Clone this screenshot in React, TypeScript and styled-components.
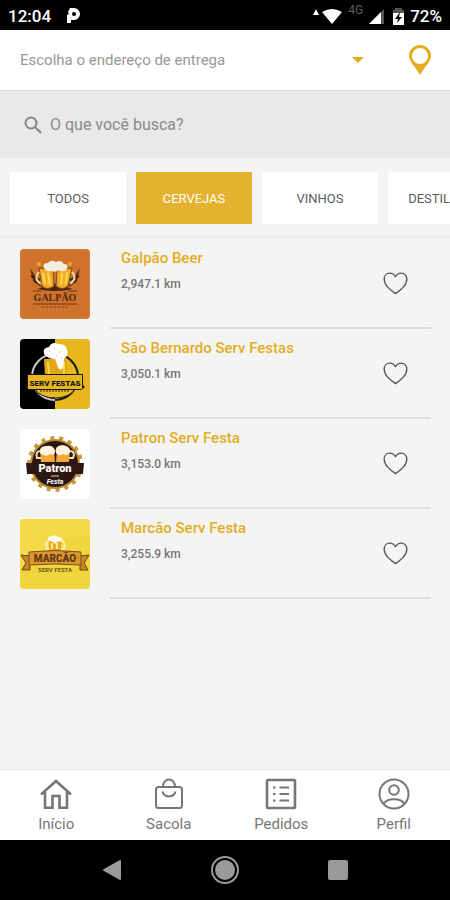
import React, { useState } from "react";
import styled, { createGlobalStyle } from "styled-components";

const gold = "#e3ad1f";
const grey = "#767676";

const GlobalStyle = createGlobalStyle`
  *, *::before, *::after { box-sizing: border-box; }
  body { margin: 0; background: #f4f4f4; font-family: Roboto, "Liberation Sans", sans-serif; }
  button, input, select { font-family: inherit; }
  svg { display: block; flex: none; }
`;

const Screen = styled.div`
  display: flex;
  flex-direction: column;
  min-height: 100vh;
  background: #f4f4f4;
`;

const StatusBar = styled.header`
  display: flex;
  align-items: center;
  height: 30px;
  padding: 2px 8px 0;
  background: #000;
  color: #fff;
  font-size: 17px;
  font-weight: 500;
  line-height: 28px;
`;

const Clock = styled.span`
  margin-right: 16px;
`;

const StatusIcons = styled.div`
  display: flex;
  align-items: center;
  gap: 6px;
  margin-left: auto;
`;

const Network = styled.span`
  align-self: flex-start;
  color: #5e5e5e;
  font-size: 12px;
  font-weight: 400;
  line-height: 16px;
`;

const Signal = styled.div`
  display: flex;
  gap: 3px;
  align-items: center;
  margin-right: 2px;
`;

const AddressBar = styled.div`
  display: flex;
  align-items: center;
  gap: 40px;
  height: 60px;
  padding: 0 19px 0 20px;
  background: #fff;
`;

const AddressField = styled.label`
  display: grid;
  flex: 1;
  align-items: center;
  > * { grid-area: 1 / 1; }
  > svg { justify-self: end; margin-right: 5px; pointer-events: none; }
`;

const AddressSelect = styled.select`
  appearance: none;
  width: 100%;
  height: 40px;
  padding: 0;
  border: 0;
  background: none;
  color: #999;
  font-size: 15px;
`;

const PlainButton = styled.button`
  display: block;
  padding: 0;
  border: 0;
  background: none;
  cursor: pointer;
`;

const SearchBar = styled.label`
  display: flex;
  align-items: center;
  gap: 8px;
  height: 68px;
  padding: 0 24px;
  border-top: 1px solid #dedede;
  background: #e9e9e9;
`;

const SearchInput = styled.input`
  flex: 1;
  min-width: 0;
  height: 40px;
  padding: 0;
  border: 0;
  outline: 0;
  background: none;
  color: #555;
  font-size: 16px;
  &::placeholder { color: #8a8a8a; opacity: 1; }
`;

const Categories = styled.nav`
  display: flex;
  gap: 10px;
  padding: 14px 10px 12px;
  border-bottom: 3px solid #ededed;
  overflow-x: auto;
  scrollbar-width: none;
`;

const Category = styled.button<{ $active: boolean }>`
  flex: none;
  width: 116px;
  height: 52px;
  padding: 0;
  border: 0;
  background: ${(p) => (p.$active ? "#e4b22f" : "#fff")};
  color: ${(p) => (p.$active ? "#fff" : "#5c5c5c")};
  font-size: 13px;
`;

const StoreList = styled.ul`
  flex: 1;
  margin: 0;
  padding: 0 19px 0 20px;
  list-style: none;
`;

const StoreRow = styled.li`
  display: flex;
  gap: 20px;
  height: 90px;
`;

const Logo = styled.svg`
  width: 70px;
  height: 70px;
  margin-top: 10px;
  border-radius: 4px;
`;

const StoreBody = styled.div`
  display: flex;
  flex: 1;
  justify-content: space-between;
  align-items: center;
  padding: 0 23px 0 11px;
  border-bottom: 2px solid #dfdfdf;
`;

const StoreText = styled.div`
  align-self: flex-start;
  padding-top: 9px;
`;

const StoreName = styled.h2`
  margin: 0 0 8px;
  color: ${gold};
  font-size: 15px;
  font-weight: 500;
  line-height: 20px;
`;

const Distance = styled.p`
  margin: 0;
  color: ${grey};
  font-size: 12px;
  font-weight: 500;
  line-height: 16px;
`;

const TabBar = styled.nav`
  display: grid;
  grid-template-columns: repeat(4, 1fr);
  height: 71px;
  border-top: 1px solid #e8e8e8;
  background: #fff;
`;

const TabLink = styled.a`
  display: flex;
  flex-direction: column;
  align-items: center;
  gap: 4px;
  padding-top: 8px;
  color: ${grey};
  font-size: 15px;
  line-height: 20px;
  text-decoration: none;
`;

const SystemBar = styled.footer`
  display: flex;
  justify-content: center;
  align-items: center;
  gap: 88px;
  height: 60px;
  background: #000;
`;

function GalpaoLogo() {
  return (
    <Logo viewBox="0 0 70 70" aria-label="Galpão">
      <rect width="70" height="70" fill="#cf722b" />
      <rect x="1" y="1" width="68" height="68" rx="4" fill="none" stroke="#d87c36" />
      <path d="M10 19l8 12 4 8-9-7zM60 19l-8 12-4 8 9-7z" fill="#633319" />
      <path d="M11 27l9 4M14 32l7 3M59 27l-9 4M56 32l-7 3" stroke="#3c2317" strokeWidth="2" />
      <path d="M21 39q14-9 28 0l4 1q-18 4-36 0z" fill="#4b2513" />
      <path d="M19 19l14 2 1 16q-7 5-12 0z" fill="#f1ac25" stroke="#7f4920" />
      <path d="M52 19l-15 2-1 16q6 5 12 0z" fill="#f1ac25" stroke="#7f4920" />
      <path d="M19 23q-6 7 2 12M52 23q6 6-2 12" fill="none" stroke="#f4d5a0" strokeWidth="2" />
      <path d="M23 24l2 11M28 24l2 12M42 24l-1 12M47 23l-1 12" stroke="#ffd85a" strokeWidth="2" />
      <path d="M24 19q-2-5 4-5 3-4 8-1 5-3 8 2 5 0 3 5-4 4-8 1-4 3-7 1-6 1-8-3z" fill="#f4eee1" />
      <circle cx="19" cy="15" r="2" fill="#f1a72e" /><circle cx="50" cy="15" r="2" fill="#f1a72e" />
      <path d="M13 42h8M48 42h9M13 55h44" stroke="#713719" />
      <text x="35" y="52" textAnchor="middle" fontFamily="Liberation Serif" fontSize="10" fontWeight="700" fill="#522714">GALPÃO</text>
      <path d="M21 58h28" stroke="#87451f" strokeDasharray="3 1" />
    </Logo>
  );
}

function ServFestasLogo() {
  return (
    <Logo viewBox="0 0 70 70" aria-label="Serv Festas">
      <rect width="70" height="70" fill="#e8b71f" />
      <rect width="35" height="70" fill="#000" />
      <path d="M35 15a23 23 0 1 0 0 46" fill="none" stroke="#c9c9c9" strokeWidth="2" />
      <path d="M35 15a23 23 0 0 1 0 46" fill="none" stroke="#171717" strokeWidth="2" />
      <path d="M15 50a21 13 0 0 0 40 0z" fill="#e8b71f" stroke="#171717" />
      <path d="M24 20l23-1-1 19H25z" fill="#e2a817" />
      <path d="M28 23l1 13M44 23v14" stroke="#f8d552" strokeWidth="2" />
      <path d="M24 15q-2-6 5-7 3-6 9-3 8-1 9 6 2 5-3 9l-1 9q-3 4-5-1l-3-8q-7 0-11-5z" fill="#fff" />
      <path d="M29 12h1M34 9h1M39 13h1M36 17h1M41 19h1" stroke="#aaa" />
      <path d="M7 35h56v11l2 2-4 3H9l-4-3 2-3z" fill="#171717" />
      <path d="M8 36h54v14H8z" fill="#e8b71f" />
      <text x="35" y="47" textAnchor="middle" fontFamily="Roboto" fontSize="8" fontWeight="900" fill="#171717">SERV FESTAS</text>
      <path d="M20 52h30" stroke="#282317" strokeDasharray="2 1" />
    </Logo>
  );
}

function PatronLogo() {
  return (
    <Logo viewBox="0 0 70 70" aria-label="Patron Serv Festa">
      <rect width="70" height="70" fill="#fff" />
      <circle cx="35" cy="35" r="26" fill="none" stroke="#c89a3c" strokeWidth="4" strokeDasharray="4 5" />
      <circle cx="35" cy="35" r="25" fill="#ba8b33" />
      <circle cx="35" cy="35" r="23" fill="#2c1715" />
      <path d="M20 20l14 1 1 12H21zM37 21l13-1-1 13H36z" fill="#f0a838" />
      <path d="M21 22q-6 0-4 7h4M49 22q7 0 4 7h-4" fill="none" stroke="#f2dfb6" strokeWidth="2" />
      <path d="M20 24q-1-7 6-7 8-1 9 5 0 5-5 3-4 4-10-1zM36 24q-2-7 6-8 8 1 8 6-1 6-7 3-4 3-7-1z" fill="#fff2de" />
      <path d="M6 34h58l-1 11H7z" fill="#301812" />
      <text x="35" y="43" textAnchor="middle" fontFamily="Roboto" fontSize="11" fontWeight="900" fill="#fff">Patron</text>
      <path d="M31 47h8" stroke="#e6cda4" />
      <text x="35" y="55" textAnchor="middle" fontFamily="Roboto" fontSize="7" fontStyle="italic" fontWeight="700" fill="#fff">Festa</text>
    </Logo>
  );
}

function MarcaoLogo() {
  return (
    <Logo viewBox="0 0 70 70" aria-label="Marcão Serv Festa">
      <rect width="70" height="70" fill="#f0d63c" />
      <path d="M0 0h70v16Q30 20 0 48z" fill="#f2da48" />
      <path d="M29 20h12v12H29z" fill="#f0a830" />
      <path d="M41 22q5 0 3 8h-3M29 22q-4 1-2 8h2" fill="none" stroke="#fbf2b4" strokeWidth="2" />
      <path d="M32 24v6M37 24v6" stroke="#ffe98c" strokeWidth="2" />
      <path d="M28 21q-1-4 4-4 4-2 6 1 5 0 4 4l-5 1-2 2-2-2z" fill="#fffbe7" />
      <path d="M1 36l9 1v14H2l4-7zM69 36l-9 1v14h8l-4-7z" fill="#c78726" stroke="#674516" />
      <path d="M9 33q26-3 52 0v13q-26-2-52 0z" fill="#d9982f" stroke="#76501a" />
      <text x="35" y="43" textAnchor="middle" fontFamily="Roboto" fontSize="10" fontWeight="900" fill="#653614">MARCÃO</text>
      <text x="35" y="53" textAnchor="middle" fontFamily="Roboto" fontSize="6" fontWeight="700" fill="#6b5a1c">SERV FESTA</text>
    </Logo>
  );
}

function Heart() {
  return (
    <svg width="25" height="23" viewBox="0 0 26 24" fill="none" stroke="#555" strokeWidth="1.4" strokeLinejoin="round">
      <path d="M13 5C11.4 2.2 9.3 1.200 7 1.200C3.500 1.200 1.200 3.800 1.200 7.500C1.200 13.800 7 18.200 13 22.600C19 18.200 24.800 13.800 24.800 7.500C24.800 3.800 22.500 1.200 19 1.200C16.700 1.200 14.600 2.200 13 5Z" />
    </svg>
  );
}

const categories = ["TODOS", "CERVEJAS", "VINHOS", "DESTILADOS"];

const stores = [
  { name: "Galpão Beer", distance: "2,947.1 km", Mark: GalpaoLogo },
  { name: "São Bernardo Serv Festas", distance: "3,050.1 km", Mark: ServFestasLogo },
  { name: "Patron Serv Festa", distance: "3,153.0 km", Mark: PatronLogo },
  { name: "Marcão Serv Festa", distance: "3,255.9 km", Mark: MarcaoLogo },
];

const tabs = [
  {
    label: "Início",
    icon: (
      <svg width="32" height="32" viewBox="0 0 32 32" fill="none" stroke={grey} strokeWidth="2.6">
        <path d="M1 16.500L16 3L31 16.500M5 14V29.800H12.500V18H19.500V29.800H27V14" />
      </svg>
    ),
  },
  {
    label: "Sacola",
    icon: (
      <svg width="32" height="32" viewBox="0 0 32 32" fill="none" stroke={grey} strokeWidth="2">
        <rect x="3" y="9" width="26" height="21" rx="2.500" />
        <path d="M10 9C10 -1 22 -1 22 9M9.500 13.500C11 20 21 20 22.500 13.500" />
      </svg>
    ),
  },
  {
    label: "Pedidos",
    icon: (
      <svg width="32" height="32" viewBox="0 0 32 32" fill="none" stroke={grey} strokeWidth="2.6">
        <rect x="2" y="2" width="28" height="28" rx="1" />
        <path d="M8 9.500H10.500M8 16H10.500M8 22.500H10.500M14.500 9.500H24M14.500 16H24M14.500 22.500H24" strokeWidth="2" />
      </svg>
    ),
  },
  {
    label: "Perfil",
    icon: (
      <svg width="32" height="32" viewBox="0 0 32 32" fill="none" stroke={grey} strokeWidth="2">
        <circle cx="16" cy="16" r="14.500" />
        <circle cx="16" cy="12" r="4.800" />
        <path d="M5.500 26C9 19.500 23 19.500 26.500 26" />
      </svg>
    ),
  },
];

export default function App() {
  const [active, setActive] = useState("CERVEJAS");
  return (
    <Screen>
      <GlobalStyle />
      <StatusBar>
        <Clock>12:04</Clock>
        <svg width="14" height="16" viewBox="0 0 14 16">
          <path d="M3 0H7A6 6 0 0 1 7 12H4V15H0V7L2 6L1 4Z" fill="#fff" />
          <circle cx="7" cy="6" r="2" fill="#000" />
        </svg>
        <StatusIcons>
          <svg width="29" height="17" viewBox="0 0 29 17" fill="#fff">
            <path d="M0 7L3 1L6 7ZM9 4Q19-2 29 4L19 16Z" />
          </svg>
          <Network>4G</Network>
          <Signal>
            <svg width="16" height="15" viewBox="0 0 16 15">
              <path d="M15 0V15H0Z" fill="#555" />
              <path d="M12 3V15H0Z" fill="#fff" />
            </svg>
          </Signal>
          <svg width="11" height="17" viewBox="0 0 11 17">
            <path d="M2 2V0H9V2H11V5H0V2Z" fill="#555" />
            <path d="M0 5H11V17H0Z" fill="#fff" />
            <path d="M7 4L2 11H5L4 15L9 9H6Z" fill="#000" />
          </svg>
          <span>72%</span>
        </StatusIcons>
      </StatusBar>

      <AddressBar>
        <AddressField>
          <AddressSelect aria-label="Endereço de entrega">
            <option>Escolha o endereço de entrega</option>
          </AddressSelect>
          <svg width="12" height="6" viewBox="0 0 12 6"><path d="M0 0H12L6 6Z" fill={gold} /></svg>
        </AddressField>
        <PlainButton aria-label="Localização">
          <svg width="22" height="30" viewBox="0 0 22 30">
            <path fillRule="evenodd" fill={gold} d="M11 0A11 11 0 0 1 22 11C22 16 17 20 11 30C5 20 0 16 0 11A11 11 0 0 1 11 0ZM11 3A8 8 0 1 0 11 19A8 8 0 1 0 11 3Z" />
          </svg>
        </PlainButton>
      </AddressBar>

      <SearchBar>
        <svg width="18" height="18" viewBox="0 0 18 18" fill="none" stroke="#858585" strokeWidth="2">
          <circle cx="7" cy="7" r="5.500" />
          <path d="M11 11L17 17" />
        </svg>
        <SearchInput type="search" placeholder="O que você busca?" aria-label="Buscar" />
      </SearchBar>

      <Categories aria-label="Categorias">
        {categories.map((name) => (
          <Category key={name} $active={name === active} aria-pressed={name === active} onClick={() => setActive(name)}>
            {name}
          </Category>
        ))}
      </Categories>

      <StoreList>
        {stores.map(({ name, distance, Mark }) => (
          <StoreRow key={name}>
            <Mark />
            <StoreBody>
              <StoreText>
                <StoreName>{name}</StoreName>
                <Distance>{distance}</Distance>
              </StoreText>
              <PlainButton aria-label={`Favoritar ${name}`}><Heart /></PlainButton>
            </StoreBody>
          </StoreRow>
        ))}
      </StoreList>

      <TabBar aria-label="Principal">
        {tabs.map(({ label, icon }) => (
          <TabLink key={label} href="#">
            {icon}
            {label}
          </TabLink>
        ))}
      </TabBar>

      <SystemBar>
        <PlainButton aria-label="Voltar">
          <svg width="20" height="22" viewBox="0 0 20 22"><path d="M2 11L18 2V20Z" fill="#9a9a9a" stroke="#9a9a9a" strokeLinejoin="round" strokeWidth="2" /></svg>
        </PlainButton>
        <PlainButton aria-label="Tela inicial">
          <svg width="30" height="30" viewBox="0 0 30 30">
            <circle cx="15" cy="15" r="13" fill="none" stroke="#9a9a9a" strokeWidth="2" />
            <circle cx="15" cy="15" r="10" fill="#9a9a9a" />
          </svg>
        </PlainButton>
        <PlainButton aria-label="Recentes">
          <svg width="20" height="20" viewBox="0 0 20 20"><rect width="20" height="20" rx="2" fill="#9a9a9a" /></svg>
        </PlainButton>
      </SystemBar>
    </Screen>
  );
}
